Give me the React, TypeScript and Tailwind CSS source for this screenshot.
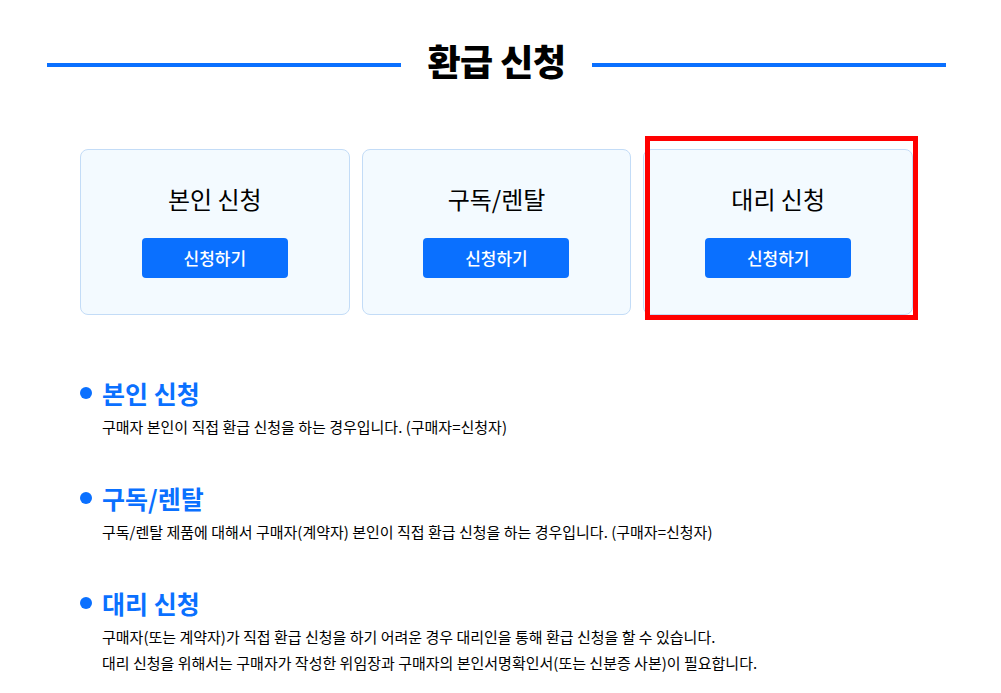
const options = [
  { id: 1, title: '본인 신청', selected: false },
  { id: 2, title: '구독/렌탈', selected: false },
  { id: 3, title: '대리 신청', selected: true },
];

const guides = [
  {
    id: 1,
    title: '본인 신청',
    lines: ['구매자 본인이 직접 환급 신청을 하는 경우입니다. (구매자=신청자)'],
  },
  {
    id: 2,
    title: '구독/렌탈',
    lines: ['구독/렌탈 제품에 대해서 구매자(계약자) 본인이 직접 환급 신청을 하는 경우입니다. (구매자=신청자)'],
  },
  {
    id: 3,
    title: '대리 신청',
    lines: [
      '구매자(또는 계약자)가 직접 환급 신청을 하기 어려운 경우 대리인을 통해 환급 신청을 할 수 있습니다.',
      '대리 신청을 위해서는 구매자가 작성한 위임장과 구매자의 본인서명확인서(또는 신분증 사본)이 필요합니다.',
    ],
  },
];

export default function App() {
  return (
    <div className="min-h-[693px] bg-white font-['Noto_Sans_CJK_KR','Noto_Sans',sans-serif] text-black">
      <div className="ml-[47px] w-[899px]">
        {/* Page title */}
        <div className="flex items-start gap-[26px] pt-[36px]">
          <div className="mt-[27px] h-[4px] flex-1 bg-[#0a70ff]" />
          <h1 className="text-[36px] font-extrabold leading-[48px] tracking-[-0.5px]">환급 신청</h1>
          <div className="mt-[27px] h-[4px] flex-1 bg-[#0a70ff]" />
        </div>

        {/* Apply type cards */}
        <div className="mt-[65px] grid grid-cols-3 gap-[12px] px-[33px]">
          {options.map((opt) => (
            <div key={opt.id} className="relative">
              <div className="flex h-[166px] flex-col items-center rounded-[8px] border border-[#c3dcf7] bg-[#f3faff] pt-[34px]">
                <h2 className="text-[24px] leading-[30px]">{opt.title}</h2>
                <button className="mt-[24px] h-[40px] w-[146px] rounded-[4px] bg-[#0a70ff] text-[17px] font-medium text-white">
                  신청하기
                </button>
              </div>
              {opt.selected && (
                <div className="pointer-events-none absolute -top-[13px] left-[2px] -right-[5px] -bottom-[5px] border-[5px] border-[#ff0000]" />
              )}
            </div>
          ))}
        </div>

        {/* Descriptions */}
        <div className="mt-[62px] flex flex-col gap-[42px] pl-[33px]">
          {guides.map((g) => (
            <div key={g.id}>
              <div className="flex items-center">
                <span className="h-[12px] w-[12px] rounded-full bg-[#0a70ff]" />
                <h3 className="ml-[10px] text-[25px] font-bold leading-[32px] text-[#0a70ff]">{g.title}</h3>
              </div>
              <div className="mt-[5px] pl-[22px] text-[15px] leading-[26px]">
                {g.lines.map((line, i) => (
                  <p key={i}>{line}</p>
                ))}
              </div>
            </div>
          ))}
        </div>
      </div>
    </div>
  );
}
